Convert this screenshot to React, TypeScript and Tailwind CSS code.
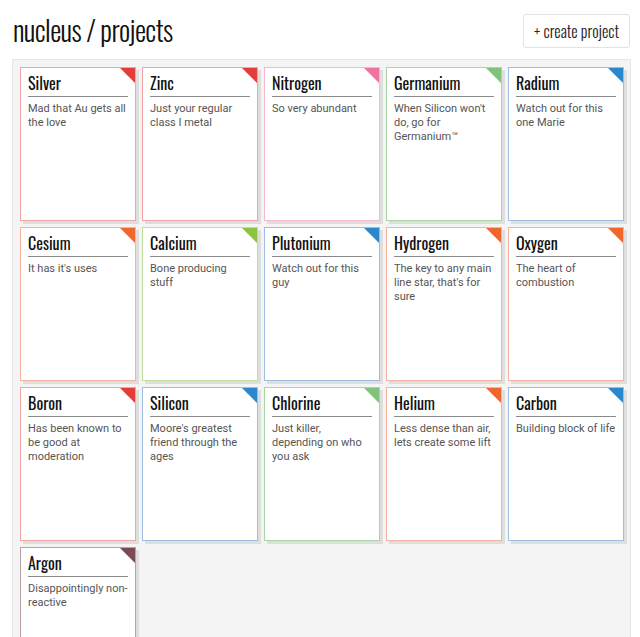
const cond = "font-['Oswald','Liberation_Sans_Narrow','DejaVu_Sans_Condensed',sans-serif]";

type Project = { name: string; desc: string; border: string; corner: string };

const red = { border: "border-[#f4a4a4]", corner: "bg-[#e53b3b]" };
const orange = { border: "border-[#f7b3a0]", corner: "bg-[#f1662a]" };
const pink = { border: "border-[#f6b8cc]", corner: "bg-[#ef72a0]" };
const green = { border: "border-[#a8d5a4]", corner: "bg-[#80c47c]" };
const lime = { border: "border-[#bedd9e]", corner: "bg-[#8cc43e]" };
const blue = { border: "border-[#9dbde3]", corner: "bg-[#2a88cf]" };
const maroon = { border: "border-[#b9a1a4]", corner: "bg-[#7a4b52]" };

const projects: Project[] = [
  { name: "Silver", desc: "Mad that Au gets all the love", ...red },
  { name: "Zinc", desc: "Just your regular class I metal", ...red },
  { name: "Nitrogen", desc: "So very abundant", ...pink },
  { name: "Germanium", desc: "When Silicon won't do, go for Germanium™", ...green },
  { name: "Radium", desc: "Watch out for this one Marie", ...blue },
  { name: "Cesium", desc: "It has it's uses", ...orange },
  { name: "Calcium", desc: "Bone producing stuff", ...lime },
  { name: "Plutonium", desc: "Watch out for this guy", ...blue },
  { name: "Hydrogen", desc: "The key to any main line star, that's for sure", ...orange },
  { name: "Oxygen", desc: "The heart of combustion", ...orange },
  { name: "Boron", desc: "Has been known to be good at moderation", ...red },
  { name: "Silicon", desc: "Moore's greatest friend through the ages", ...blue },
  { name: "Chlorine", desc: "Just killer, depending on who you ask", ...green },
  { name: "Helium", desc: "Less dense than air, lets create some lift", ...orange },
  { name: "Carbon", desc: "Building block of life", ...blue },
  { name: "Argon", desc: "Disappointingly non-reactive", ...maroon },
];

const Card = ({ p }: { p: Project }) => (
  <div
    className={`relative h-[154px] bg-white border ${p.border} shadow-[3px_3px_0_rgba(0,0,0,0.09)] px-[7px] pt-[4px]`}
  >
    <div
      className={`absolute top-0 right-0 w-[15px] h-[15px] ${p.corner} [clip-path:polygon(0_0,100%_0,100%_100%)]`}
    />
    <div className={`${cond} text-[16px] leading-[22px] font-normal text-[#111] pb-[2px] border-b border-[#8a8a8a]`}>
      {p.name}
    </div>
    <p className="mt-[5px] font-['Roboto',sans-serif] font-normal text-[11px] leading-[14px] text-[#555]">
      {p.desc}
    </p>
  </div>
);

export default function App() {
  return (
    <div className="w-[640px] h-[637px] overflow-hidden bg-white">
      <div className="flex items-start justify-between pl-[13px] pr-[10px] pt-[14px]">
        <h1 className={`${cond} text-[28px] leading-[31px] font-light tracking-[-0.6px] text-[#111]`}>
          nucleus / projects
        </h1>
        <button
          className={`${cond} h-[34px] px-[10px] text-[16px] font-light text-[#222] bg-white border border-[#e2e2e2] rounded-[3px]`}
        >
          + create project
        </button>
      </div>
      <div className="ml-[12px] mr-[9px] mt-[11px] bg-[#f4f4f4] border border-[#e6e6e6] pl-[7px] pt-[7px] pb-[8px]">
        <div className="grid grid-cols-[repeat(5,116px)] gap-x-[6px] gap-y-[6px]">
          {projects.map((p) => (
            <Card key={p.name} p={p} />
          ))}
        </div>
      </div>
    </div>
  );
}
